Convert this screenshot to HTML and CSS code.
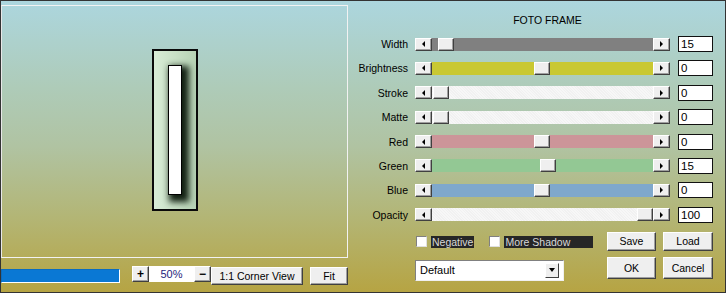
FILE: index.html
```html
<!DOCTYPE html>
<html lang="en">
<head>
  <meta charset="UTF-8">
  <title>Foto Frame</title>
  <link rel="stylesheet" href="styles.css">
</head>
<body>

  <div class="window">

    <!-- Preview column -->
    <div class="left">
      <div class="preview">
        <div class="frame">
          <div class="frame-bar"></div>
        </div>
      </div>

      <div class="left-bottom">
        <div class="progress"></div>
        <div class="zoom">
          <button class="btn btn-sm">+</button>
          <span class="zoom-value">50%</span>
          <button class="btn btn-sm">&minus;</button>
          <button class="btn corner">1:1 Corner View</button>
        </div>
        <button class="btn fit">Fit</button>
      </div>
    </div>

    <!-- Settings panel -->
    <div class="panel">
      <h1 class="title">FOTO FRAME</h1>

      <div class="sliders">
        <div class="row">
          <span class="label">Width</span>
          <div class="slider">
            <span class="arrow arrow-left"></span>
            <div class="track track-gray"><span class="thumb" style="left: 6px"></span></div>
            <span class="arrow arrow-right"></span>
          </div>
          <span class="value">15</span>
        </div>
        <div class="row">
          <span class="label">Brightness</span>
          <div class="slider">
            <span class="arrow arrow-left"></span>
            <div class="track track-yellow"><span class="thumb" style="left: 102px"></span></div>
            <span class="arrow arrow-right"></span>
          </div>
          <span class="value">0</span>
        </div>
        <div class="row">
          <span class="label">Stroke</span>
          <div class="slider">
            <span class="arrow arrow-left"></span>
            <div class="track track-white"><span class="thumb" style="left: 1px"></span></div>
            <span class="arrow arrow-right"></span>
          </div>
          <span class="value">0</span>
        </div>
        <div class="row">
          <span class="label">Matte</span>
          <div class="slider">
            <span class="arrow arrow-left"></span>
            <div class="track track-white"><span class="thumb" style="left: 1px"></span></div>
            <span class="arrow arrow-right"></span>
          </div>
          <span class="value">0</span>
        </div>
        <div class="row">
          <span class="label">Red</span>
          <div class="slider">
            <span class="arrow arrow-left"></span>
            <div class="track track-red"><span class="thumb" style="left: 102px"></span></div>
            <span class="arrow arrow-right"></span>
          </div>
          <span class="value">0</span>
        </div>
        <div class="row">
          <span class="label">Green</span>
          <div class="slider">
            <span class="arrow arrow-left"></span>
            <div class="track track-green"><span class="thumb" style="left: 108px"></span></div>
            <span class="arrow arrow-right"></span>
          </div>
          <span class="value">15</span>
        </div>
        <div class="row">
          <span class="label">Blue</span>
          <div class="slider">
            <span class="arrow arrow-left"></span>
            <div class="track track-blue"><span class="thumb" style="left: 102px"></span></div>
            <span class="arrow arrow-right"></span>
          </div>
          <span class="value">0</span>
        </div>
        <div class="row">
          <span class="label">Opacity</span>
          <div class="slider">
            <span class="arrow arrow-left"></span>
            <div class="track track-white"><span class="thumb" style="left: 205px"></span></div>
            <span class="arrow arrow-right"></span>
          </div>
          <span class="value">100</span>
        </div>
      </div>

      <div class="bottom">
        <div class="options">
          <div class="checks">
            <span class="check"></span>
            <span class="check-label">Negative</span>
            <span class="check check-gap"></span>
            <span class="check-label check-wide">More Shadow</span>
          </div>
          <div class="select">
            <span>Default</span>
            <span class="select-btn"><span class="down"></span></span>
          </div>
        </div>
        <div class="actions">
          <button class="btn">Save</button>
          <button class="btn">Load</button>
          <button class="btn">OK</button>
          <button class="btn">Cancel</button>
        </div>
      </div>
    </div>

  </div>

</body>
</html>
```

FILE: styles.css
```css
/* General Page Styling */
body {
  margin: 0;
  padding: 0;
  font-family: 'Liberation Sans', Arial, sans-serif;
  font-size: 10.5px;
  color: #000;
}

.window {
  width: 726px;
  height: 293px;
  box-sizing: border-box;
  border: 1px solid #333;
  display: flex;
  background: linear-gradient(to bottom, #acd6de 0%, #aecbb8 30%, #b0c3a2 50%, #b3b574 75%, #b6a443 100%);
}

/* Buttons (classic bevel) */
.btn {
  font-family: inherit;
  font-size: 10.5px;
  color: #000;
  background-color: #efefef;
  border: 1px solid;
  border-color: #fff #404040 #404040 #fff;
  box-shadow: inset -1px -1px 0 #a0a0a0;
  padding: 0;
  margin: 0;
  cursor: pointer;
}

/* Preview Column */
.left {
  width: 347px;
  padding-top: 4px;
}

.preview {
  width: 347px;
  height: 253px;
  box-sizing: border-box;
  border: 1px solid #f2f2f2;
  border-left-color: #e8e8e8;
  display: flex;
  justify-content: center;
  align-items: center;
  padding-bottom: 3px;
}

.frame {
  width: 46px;
  height: 162px;
  box-sizing: border-box;
  border: 2px solid #0a0a0a;
  background: linear-gradient(to right, #d8ecd6 0%, #c8e0c6 50%, #b6d2b4 100%);
  padding: 14px 0 0 14px;
  overflow: hidden;
}

.frame-bar {
  width: 14px;
  height: 130px;
  box-sizing: border-box;
  border: 1px solid #000;
  background: #fff;
  box-shadow: 4px 4px 6px 3px rgba(10, 22, 10, 0.95);
}

.left-bottom {
  display: flex;
  align-items: flex-start;
  padding-top: 8px;
}

.progress {
  width: 119px;
  height: 14px;
  box-sizing: border-box;
  margin-top: 3px;
  background: #0a78d4;
  border: 1px solid;
  border-color: #0a6cc0 #fff #fff #0a6cc0;
}

.zoom {
  display: flex;
  align-items: flex-start;
  margin-left: 12px;
}

.btn-sm {
  width: 17px;
  height: 16px;
  font-weight: bold;
  font-size: 12px;
  line-height: 12px;
}

.zoom-value {
  width: 45px;
  height: 16px;
  background: #fff;
  color: #1e1e7c;
  text-align: center;
  line-height: 16px;
  font-size: 11px;
}

.corner {
  width: 92px;
  height: 18px;
  margin-top: 1px;
}

.fit {
  width: 38px;
  height: 18px;
  margin-top: 1px;
  margin-left: 7px;
}

/* Settings Panel */
.panel {
  flex: 1;
}

.title {
  margin: 0;
  padding: 12px 0 0 22px;
  font-size: 10.5px;
  font-weight: normal;
  line-height: 14px;
  text-align: center;
}

.sliders {
  display: flex;
  flex-direction: column;
  gap: 8.4px;
  margin-top: 9px;
}

.row {
  display: flex;
  align-items: center;
  height: 16px;
}

.label {
  width: 60px;
  margin-right: 7px;
  text-align: right;
}

.slider {
  width: 255px;
  height: 13px;
  display: flex;
}

.arrow {
  width: 17px;
  height: 13px;
  box-sizing: border-box;
  background: #efefef;
  border: 1px solid;
  border-color: #fff #404040 #404040 #fff;
  box-shadow: inset -1px -1px 0 #a0a0a0;
  display: flex;
  justify-content: center;
  align-items: center;
}

.arrow::after {
  content: '';
  width: 0;
  height: 0;
  border-top: 3px solid transparent;
  border-bottom: 3px solid transparent;
}

.arrow-left::after {
  border-right: 3px solid #000;
}

.arrow-right::after {
  border-left: 3px solid #000;
}

.track {
  flex: 1;
  position: relative;
}

.track-gray { background: #808080; }
.track-yellow { background: #c9c832; }
.track-red { background: #cc9599; }
.track-green { background: #93c894; }
.track-blue { background: #7fa8cc; }

.track-white {
  background-color: #f5f5f5;
  background-image: repeating-linear-gradient(45deg, #f7f7f7 0 1px, #f1f1f1 1px 2px);
}

.thumb {
  position: absolute;
  top: 0;
  width: 16px;
  height: 13px;
  box-sizing: border-box;
  background: #efefef;
  border: 1px solid;
  border-color: #fff #404040 #404040 #fff;
  box-shadow: inset -1px -1px 0 #a0a0a0;
}

.value {
  width: 35px;
  height: 16px;
  box-sizing: border-box;
  margin-left: 8px;
  padding-left: 2px;
  background: #fff;
  border: 1px solid #111;
  font-size: 11.5px;
  line-height: 14px;
}

/* Bottom Options */
.bottom {
  display: flex;
  margin-top: 9px;
  margin-left: 67px;
}

.options {
  width: 192px;
}

.checks {
  display: flex;
  align-items: center;
  margin-top: 4px;
  height: 12px;
}

.check {
  width: 11px;
  height: 11px;
  box-sizing: border-box;
  margin-left: 1px;
  background: #fff;
  border: 1px solid;
  border-color: #808080 #e0e0e0 #e0e0e0 #808080;
}

.check-gap {
  margin-left: 15px;
}

.check-label {
  margin-left: 4px;
  height: 12px;
  line-height: 12px;
  padding: 0 1px;
  background: #262626;
  color: #d8d8d8;
}

.check-wide {
  width: 87px;
}

.select {
  width: 149px;
  height: 21px;
  box-sizing: border-box;
  margin-top: 12px;
  background: #fff;
  border: 1px solid;
  border-color: #808080 #f0f0f0 #f0f0f0 #808080;
  display: flex;
  align-items: center;
  justify-content: space-between;
  padding: 0 4px 0 4px;
  font-size: 11px;
}

.select-btn {
  width: 14px;
  height: 15px;
  box-sizing: border-box;
  background: #efefef;
  border: 1px solid;
  border-color: #fff #404040 #404040 #fff;
  display: flex;
  justify-content: center;
  align-items: center;
}

.down {
  width: 0;
  height: 0;
  border-left: 3px solid transparent;
  border-right: 3px solid transparent;
  border-top: 4px solid #000;
}

.actions {
  display: grid;
  grid-template-columns: 49px 50px;
  grid-template-rows: 19px 22px;
  column-gap: 7px;
  row-gap: 6px;
}
```
